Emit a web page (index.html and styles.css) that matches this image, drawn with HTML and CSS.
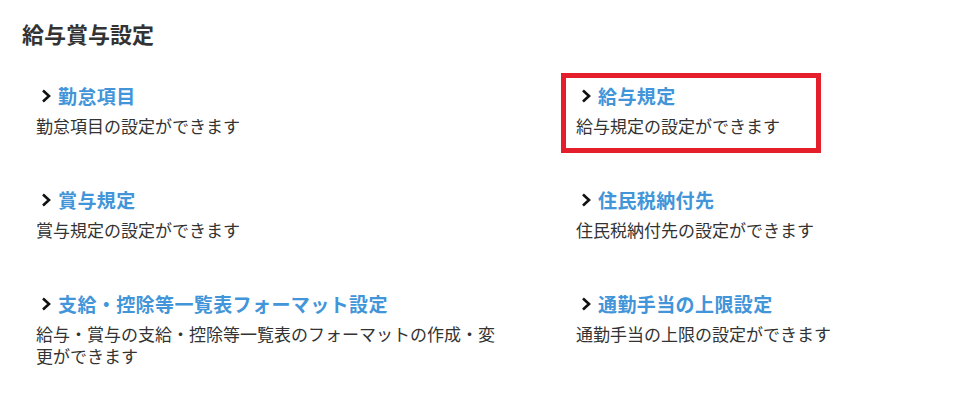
FILE: index.html
```html
<!DOCTYPE html>
<html lang="ja">
<head>
    <meta charset="UTF-8">
    <meta name="viewport" content="width=device-width, initial-scale=1.0">
    <title>給与賞与設定</title>
    <link rel="stylesheet" href="styles.css">
</head>
<body>

    <h1 class="page-title">給与賞与設定</h1>

    <div class="menu">
        <div class="item">
            <a class="item-link" href="#"><svg class="chevron" width="10" height="14" viewBox="0 0 10 14"><path d="M2 1.5 L8 7 L2 12.5"/></svg>勤怠項目</a>
            <p class="item-desc">勤怠項目の設定ができます</p>
        </div>
        <div class="item marked">
            <a class="item-link" href="#"><svg class="chevron" width="10" height="14" viewBox="0 0 10 14"><path d="M2 1.5 L8 7 L2 12.5"/></svg>給与規定</a>
            <p class="item-desc">給与規定の設定ができます</p>
        </div>
        <div class="item">
            <a class="item-link" href="#"><svg class="chevron" width="10" height="14" viewBox="0 0 10 14"><path d="M2 1.5 L8 7 L2 12.5"/></svg>賞与規定</a>
            <p class="item-desc">賞与規定の設定ができます</p>
        </div>
        <div class="item">
            <a class="item-link" href="#"><svg class="chevron" width="10" height="14" viewBox="0 0 10 14"><path d="M2 1.5 L8 7 L2 12.5"/></svg>住民税納付先</a>
            <p class="item-desc">住民税納付先の設定ができます</p>
        </div>
        <div class="item">
            <a class="item-link" href="#"><svg class="chevron" width="10" height="14" viewBox="0 0 10 14"><path d="M2 1.5 L8 7 L2 12.5"/></svg>支給・控除等一覧表フォーマット設定</a>
            <p class="item-desc">給与・賞与の支給・控除等一覧表のフォーマットの作成・変更ができます</p>
        </div>
        <div class="item">
            <a class="item-link" href="#"><svg class="chevron" width="10" height="14" viewBox="0 0 10 14"><path d="M2 1.5 L8 7 L2 12.5"/></svg>通勤手当の上限設定</a>
            <p class="item-desc">通勤手当の上限の設定ができます</p>
        </div>
    </div>

</body>
</html>
```

FILE: styles.css
```css
body {
    margin: 0;
    padding: 18px 0 0 22px;
    font-family: "Noto Sans CJK JP", "Noto Sans", sans-serif;
    color: #333333;
    background-color: #ffffff;
}
.page-title {
    margin: 0;
    font-size: 22px;
    line-height: 30px;
    font-weight: bold;
    color: #333333;
}
.menu {
    display: grid;
    grid-template-columns: 470px 1fr;
    column-gap: 70px;
    row-gap: 49px;
    margin-top: 34px;
    padding-left: 14px;
}
.item {
    position: relative;
}
.item-link {
    display: flex;
    align-items: center;
    font-size: 19px;
    line-height: 28px;
    font-weight: bold;
    letter-spacing: 0.4px;
    color: #4295d9;
    text-decoration: none;
}
.chevron {
    flex: none;
    width: 10px;
    height: 14px;
    margin: 0 7px 0 5px;
    fill: none;
    stroke: #111111;
    stroke-width: 2.6;
}
.item-desc {
    margin: 5px 0 0;
    font-size: 17px;
    line-height: 22px;
    color: #333333;
}
.marked::after {
    content: "";
    position: absolute;
    left: -15px;
    top: -9px;
    width: 250px;
    height: 70px;
    border: 5px solid #e41e2b;
}
```
